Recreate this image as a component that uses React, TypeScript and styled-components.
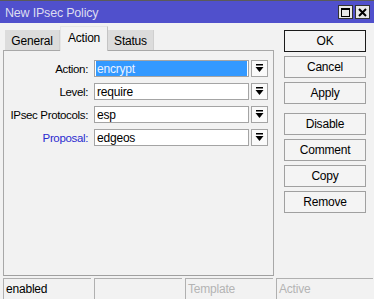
import React from "react";
import styled, { createGlobalStyle } from "styled-components";

const GlobalStyle = createGlobalStyle`
	html, body {
		margin: 0;
		padding: 0;
		background: #f2f2f2;
	}
	body {
		font-family: "Liberation Sans", Arial, sans-serif;
		font-size: 11.5px;
		letter-spacing: -0.2px;
		color: #000;
	}
`;

const Window = styled.div`
	width: 374px;
	height: 299px;
	display: flex;
	flex-direction: column;
	background: #f2f2f2;
	overflow: hidden;
`;

const TitleBar = styled.div`
	height: 22px;
	border-top: 1px solid #5a5a5a;
	background: #5050cc;
	display: flex;
	align-items: center;
	padding: 0 4px 0 5px;
	color: #dcdcf0;
	font-size: 12.5px;
`;

const Title = styled.div`
	flex: 1;
	padding-top: 1px;
`;

const WinButton = styled.div`
	width: 13px;
	height: 12px;
	border: 1px solid #333;
	background: #e8e8e8;
	margin-left: 2px;
	display: flex;
	align-items: center;
	justify-content: center;
`;

const Main = styled.div`
	display: flex;
	height: 255px;
`;

const LeftColumn = styled.div`
	width: 271px;
	margin-left: 3px;
	display: flex;
	flex-direction: column;
`;

const TabRow = styled.div`
	display: flex;
	align-items: flex-end;
	margin-top: 3px;
	padding-left: 2px;
	height: 24px;
`;

const Tab = styled.div<{ $active?: boolean; $width: number }>`
	width: ${({ $width }) => $width}px;
	height: ${({ $active }) => ($active ? 25 : 20)}px;
	box-sizing: border-box;
	display: flex;
	align-items: center;
	justify-content: center;
	background: ${({ $active }) => ($active ? "#f2f2f2" : "#dcdcdc")};
	border-top: ${({ $active }) => ($active ? "1px solid #e6e6e6" : "none")};
	border-left: ${({ $active }) => ($active ? "1px solid #e6e6e6" : "none")};
	border-right: 1px solid ${({ $active }) => ($active ? "#c4c4c4" : "#d0d0d0")};
	margin-bottom: ${({ $active }) => ($active ? -1 : 0)}px;
	padding-top: ${({ $active }) => ($active ? 0 : 2)}px;
	padding-bottom: ${({ $active }) => ($active ? 3 : 0)}px;
	font-size: 12px;
	position: relative;
	z-index: ${({ $active }) => ($active ? 1 : 0)};
`;

const Panel = styled.div`
	flex: 1;
	border: 1px solid #a8a8a8;
	border-bottom-color: #a0a0a0;
	margin-bottom: 2px;
	padding-top: 9px;
	display: flex;
	flex-direction: column;
	gap: 6px;
`;

const Row = styled.div`
	display: flex;
	align-items: center;
	height: 17px;
`;

const Label = styled.div<{ $link?: boolean }>`
	width: 84px;
	text-align: right;
	color: ${({ $link }) => ($link ? "#2a2ad0" : "#000")};
	margin-right: 6px;
	white-space: nowrap;
	letter-spacing: -0.35px;
`;

const Field = styled.div`
	width: 151px;
	height: 15px;
	border: 1px solid #a4a4a4;
	background: #fff;
	display: flex;
	align-items: center;
	padding-left: 2px;
	box-sizing: content-box;
	margin-right: 2px;
`;

const FieldText = styled.span<{ $selected?: boolean }>`
	background: ${({ $selected }) => ($selected ? "#3399ff" : "transparent")};
	color: ${({ $selected }) => ($selected ? "#eaf2ff" : "#000")};
	flex: 1;
	height: 100%;
	display: flex;
	align-items: center;
	margin-left: -1px;
	padding-left: 1px;
	margin-right: 1px;
	font-size: 12px;
`;

const DropButton = styled.div`
	width: 15px;
	height: 15px;
	border: 1px solid #a4a4a4;
	background: #fafafa;
	display: flex;
	align-items: center;
	justify-content: center;
`;

const RightColumn = styled.div`
	margin-left: 10px;
	padding-top: 7px;
	display: flex;
	flex-direction: column;
	width: 82px;
`;

const Button = styled.div<{ $default?: boolean; $gap?: number }>`
	height: 20px;
	border: 1px solid ${({ $default }) => ($default ? "#1a1a1a" : "#a0a0a0")};
	background: #f4f4f4;
	display: flex;
	align-items: center;
	justify-content: center;
	margin-bottom: ${({ $gap }) => $gap ?? 4}px;
	font-size: 12px;
`;

const StatusBar = styled.div`
	display: flex;
	padding-left: 3px;
	gap: 3px;
	height: 21px;
`;

const StatusCell = styled.div<{ $width: number; $dim?: boolean }>`
	width: ${({ $width }) => $width}px;
	border-top: 1px solid #b0b0b0;
	border-left: 1px solid #b0b0b0;
	display: flex;
	align-items: center;
	padding-left: 2px;
	font-size: 12px;
	color: ${({ $dim }) => ($dim ? "#b4b4b4" : "#000")};
`;

const DropIcon = () => (
	<svg width="9" height="9" viewBox="0 0 9 9">
		<rect x="1" y="0" width="7" height="1.5" fill="#000" />
		<polygon points="0.5,3 8.5,3 4.5,8" fill="#000" />
	</svg>
);

const rows = [
	{ label: "Action:", value: "encrypt", selected: true },
	{ label: "Level:", value: "require" },
	{ label: "IPsec Protocols:", value: "esp" },
	{ label: "Proposal:", value: "edgeos", link: true },
];

const buttons = ["OK", "Cancel", "Apply", "Disable", "Comment", "Copy", "Remove"];

const App: React.FC = () => {
	return (
		<>
			<GlobalStyle />
			<Window>
				<TitleBar>
					<Title>New IPsec Policy</Title>
					<WinButton>
						<svg width="9" height="9" viewBox="0 0 9 9">
							<rect x="0.5" y="0.5" width="8" height="8" fill="none" stroke="#000" />
							<rect x="0.5" y="0.5" width="8" height="1.5" fill="#000" />
						</svg>
					</WinButton>
					<WinButton>
						<svg width="9" height="9" viewBox="0 0 9 9">
							<path d="M1 1 L8 8 M8 1 L1 8" stroke="#000" strokeWidth="2" />
						</svg>
					</WinButton>
				</TitleBar>
				<Main>
					<LeftColumn>
						<TabRow>
							<Tab $width={55}>General</Tab>
							<Tab $width={48} $active>
								Action
							</Tab>
							<Tab $width={46}>Status</Tab>
						</TabRow>
						<Panel>
							{rows.map((r) => (
								<Row key={r.label}>
									<Label $link={r.link}>{r.label}</Label>
									<Field>
										<FieldText $selected={r.selected}>{r.value}</FieldText>
									</Field>
									<DropButton>
										<DropIcon />
									</DropButton>
								</Row>
							))}
						</Panel>
					</LeftColumn>
					<RightColumn>
						{buttons.map((b) => (
							<Button key={b} $default={b === "OK"} $gap={b === "Apply" ? 9 : 4}>
								{b}
							</Button>
						))}
					</RightColumn>
				</Main>
				<StatusBar>
					<StatusCell $width={85}>enabled</StatusCell>
					<StatusCell $width={85} />
					<StatusCell $width={85} $dim>
						Template
					</StatusCell>
					<StatusCell $width={94} $dim>
						Active
					</StatusCell>
				</StatusBar>
			</Window>
		</>
	);
};

export default App;
